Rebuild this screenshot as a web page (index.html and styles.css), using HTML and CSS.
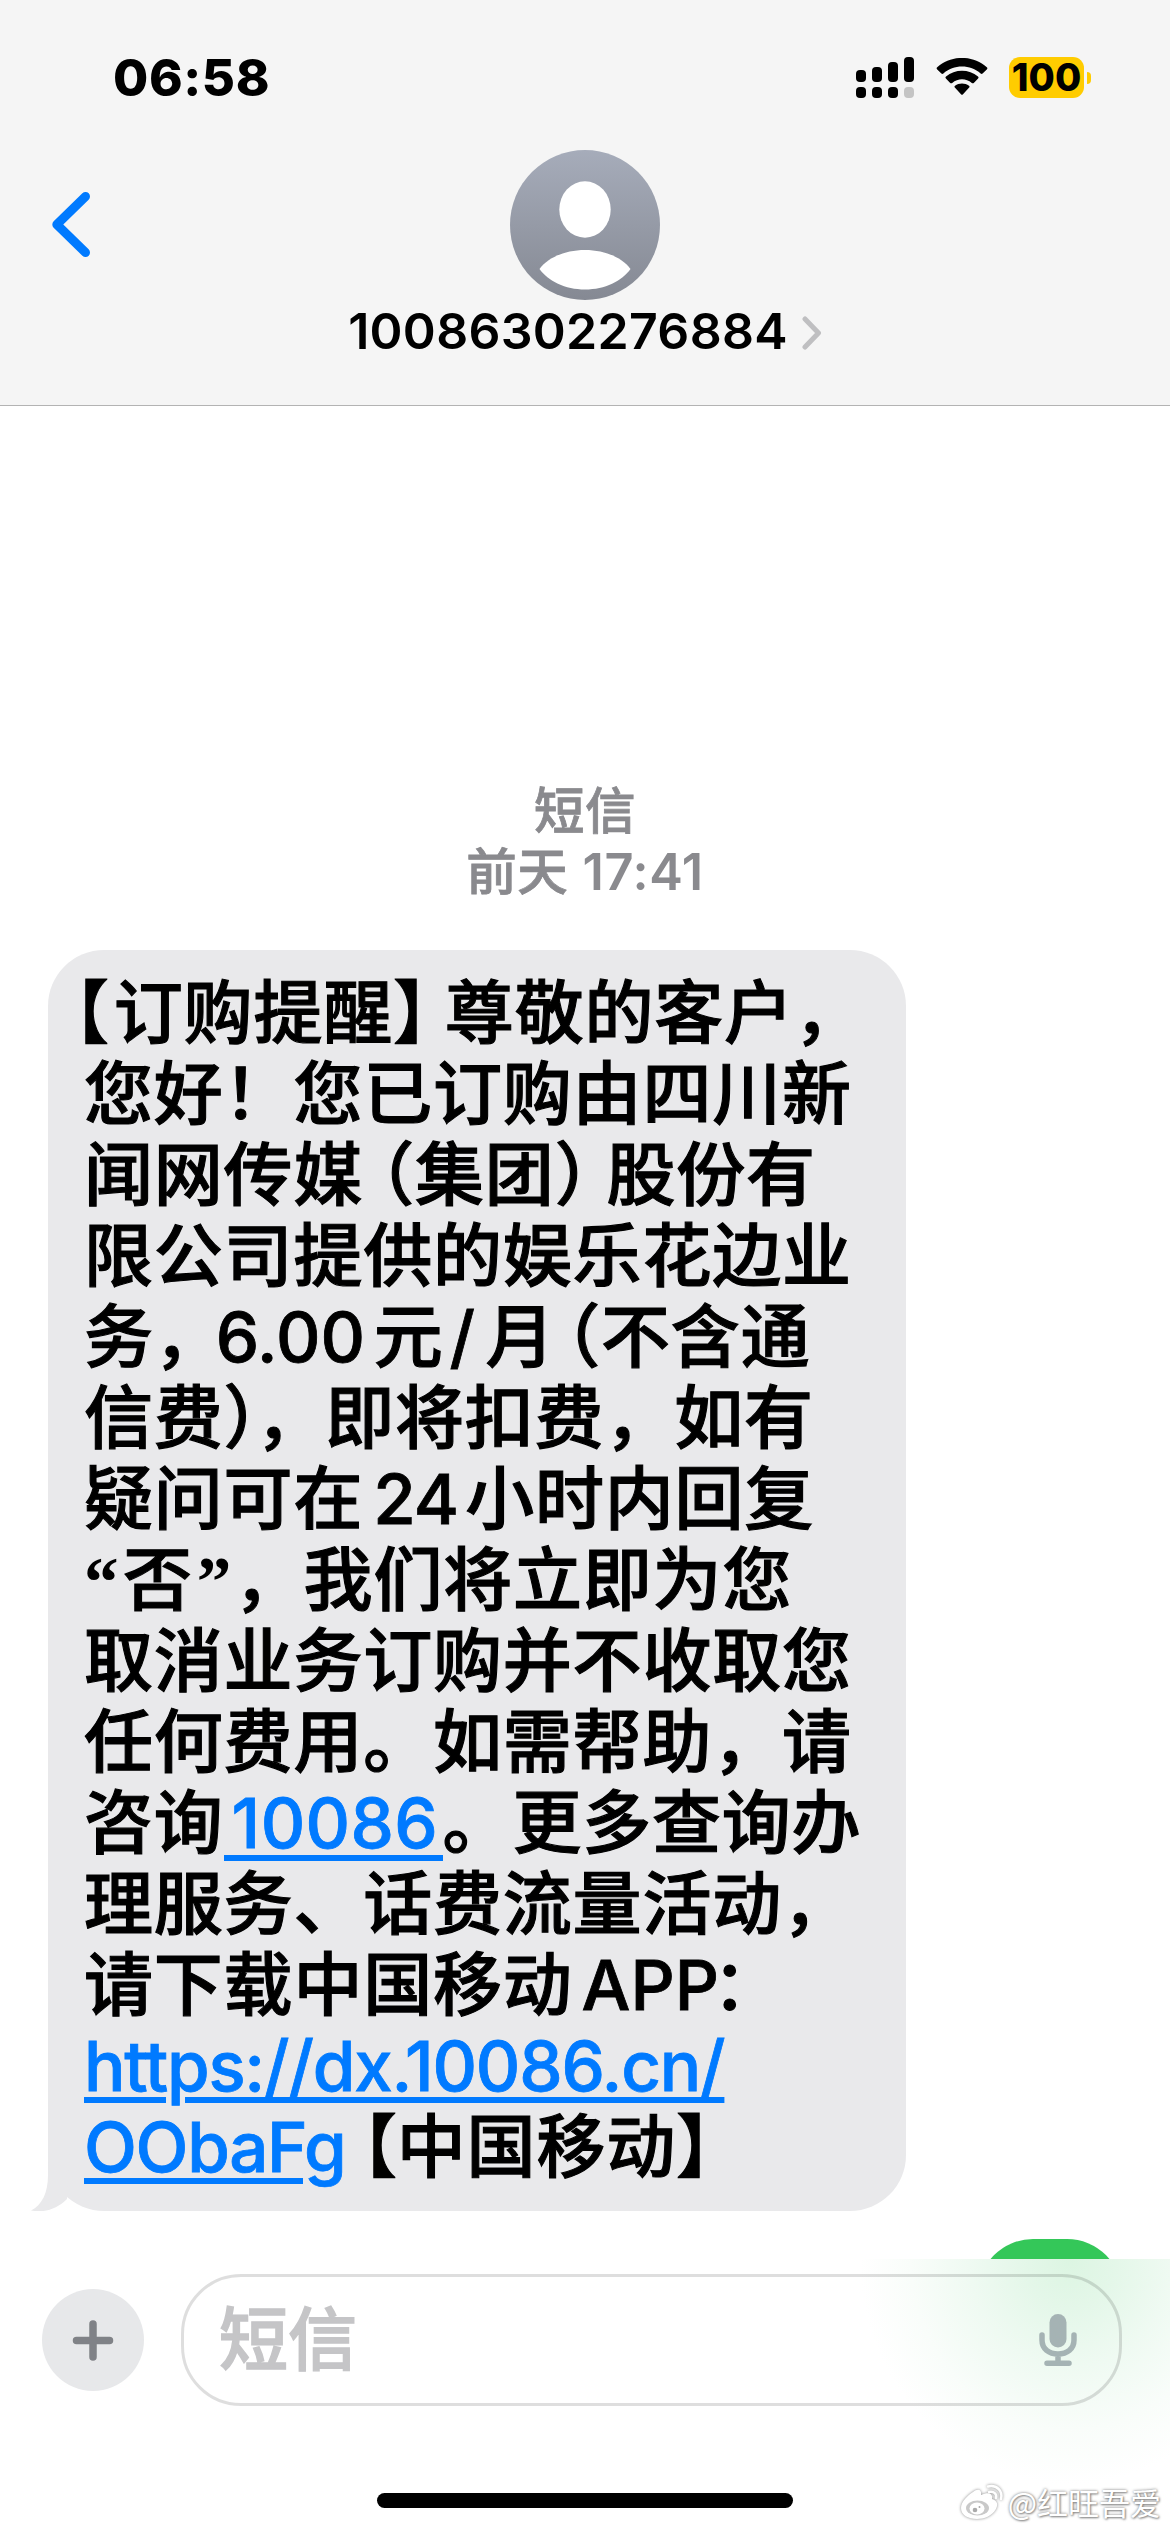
FILE: index.html
```html
<!DOCTYPE html>
<html lang="zh-CN">
<head>
<meta charset="utf-8">
<title>10086302276884</title>
<link rel="stylesheet" href="styles.css">
</head>
<body>
<div class="screen">
  <header class="top">
    <div class="status">
      <span class="clock">06:58</span>
      <div class="indicators">
        <svg class="signal" width="58" height="41" viewBox="0 0 58 41">
          <rect x="0" y="13" width="10" height="12" rx="4"/><rect x="16" y="10" width="10" height="15" rx="4"/><rect x="32" y="5" width="10" height="20" rx="4"/><rect x="48" y="0" width="10" height="25" rx="4"/>
          <rect x="0" y="30" width="10" height="11" rx="4"/><rect x="16" y="30" width="10" height="11" rx="4"/><rect x="32" y="30" width="10" height="11" rx="4"/><rect x="48" y="30" width="10" height="11" rx="4" fill="#c4c4c4"/>
        </svg>
        <svg class="wifi" width="52" height="38" viewBox="0 0 52 38">
          <path d="M1.2 11.4Q0 10.2 1.2 9.2C15-3.2 37-3.2 50.8 9.2Q52 10.2 50.800 11.400L46.600 15.600Q45.600 16.400 44.600 15.500C34.500 6.200 17.500 6.200 7.400 15.500Q6.400 16.400 5.400 15.600Z"/>
          <path d="M9.900 20.600Q8.800 19.500 10 18.500C19 10.700 33 10.700 42 18.500Q43.200 19.500 42.100 20.600L37.800 24.900Q36.800 25.700 35.800 24.900C30 20 22 20 16.200 24.900Q15.200 25.700 14.200 24.900Z"/>
          <path d="M18.800 29.600Q17.800 28.500 19 27.700C23 24.700 29 24.700 33 27.700Q34.200 28.500 33.200 29.600L27 36.300Q26 37.300 25 36.300Z"/>
        </svg>
        <div class="battery"><span class="level">100</span><i class="nub"></i></div>
      </div>
    </div>
    <div class="nav">
      <svg class="back" width="40" height="68" viewBox="0 0 40 68"><path d="M34.500 6.500 5.800 34.500 34.500 62.500"/></svg>
      <div class="contact">
        <svg class="avatar" width="150" height="150" viewBox="0 0 150 150">
          <defs><linearGradient id="sky" x1="0" y1="0" x2="0" y2="1"><stop offset="0" stop-color="#a6acba"/><stop offset="1" stop-color="#858993"/></linearGradient></defs>
          <circle cx="75" cy="75" r="75" fill="url(#sky)"/>
          <ellipse cx="75" cy="59.500" rx="25.700" ry="28.200"/>
          <path d="M29.500 119C37 108 55 100 75 100S113 108 120.500 119C112 131 95 139.500 75 139.500S38 131 29.500 119Z"/>
        </svg>
        <div class="name"><span class="number">10086302276884</span><svg class="more" width="20" height="34" viewBox="0 0 20 34"><path d="M3 3 16.500 17 3 31"/></svg></div>
      </div>
    </div>
  </header>

  <main class="thread">
    <div class="stamp"><div>短信</div><div class="when">前天 <span class="time">17:41</span></div></div>
    <div class="bubble in">
      <p><span class="half hang">【</span>订购提醒<span class="half close">】</span>尊敬的客户，</p>
      <p>您好！您已订购由四川新</p>
      <p>闻网传媒<span class="half open">（</span>集团<span class="half close">）</span>股份有</p>
      <p>限公司提供的娱乐花边业</p>
      <p>务<span class="half">，</span><span class="latin price">6.00</span>元<span class="latin slash">/</span>月<span class="half open-near">（</span>不含通</p>
      <p>信费<span class="half tight">）</span>，即将扣费，如有</p>
      <p>疑问可在<span class="latin hours">24</span>小时内回复</p>
      <p><span class="latin quote-l">“</span>否<span class="latin quote-r">”</span>，我们将立即为您</p>
      <p>取消业务订购并不收取您</p>
      <p>任何费用。如需帮助，请</p>
      <p>咨询<a class="latin tel">10086</a>。更多查询办</p>
      <p>理服务、话费流量活动，</p>
      <p>请下载中国移动<span class="latin app">APP</span>：</p>
      <p><a class="latin url">https://dx.10086.cn/</a></p>
      <p><a class="latin path">OObaFg</a><span class="half open-end">【</span>中国移动】</p>
      <svg class="tail" width="50" height="60" viewBox="0 0 50 60"><path d="M18 0V24C18 42 12 54 1 59.500C15 62 27 58 37 48L40 0Z"/></svg>
    </div>
    <div class="bubble out"></div>
  </main>

  <footer class="composer">
    <div class="entry">
      <svg class="plus" width="102" height="102" viewBox="0 0 102 102"><circle cx="51" cy="51" r="51" fill="#e7e8ea" stroke="none"/><path d="M51 35V68M34.500 51.500H67.500"/></svg>
      <div class="field">
        <span class="placeholder">短信</span>
        <svg class="mic" width="38" height="53" viewBox="0 0 38 53"><rect x="10.500" y="0" width="17" height="33.500" rx="8.500" fill="#a5b3b4" stroke="none"/><path d="M3 21V26C3 35 10 40 19 40S35 35 35 26V21M19 40V49M8 49.300H30"/></svg>
      </div>
    </div>
    <div class="home"></div>
    <div class="watermark">
      <svg width="44" height="36" viewBox="0 0 44 36"><path d="M13 8C18 4 22 6 21 11C28 8 33 9 32 15C38 17 38 21 36 25C32 32 24 35 17 35C8 35 1 31 1 24C1 18 7 12 13 8Z"/><ellipse class="hole" cx="17.500" cy="24" rx="11.500" ry="7.500"/><ellipse cx="17" cy="24.500" rx="7.500" ry="6"/><circle class="dot" cx="15" cy="26" r="2.300"/><circle class="dot" cx="19.500" cy="23" r="1"/><path class="wave" d="M28 2.500C37 .5 43 7 41 15M29 8C34 7 37 10 36 14"/></svg>
      <span>@红旺吾爱</span>
    </div>
  </footer>
</div>
</body>
</html>
```

FILE: styles.css
```css
* { box-sizing: border-box; margin: 0; padding: 0; }

body {
  width: 1170px;
  height: 2532px;
  overflow: hidden;
  background: #fff;
  color: #000;
  font-family: Inter, "Noto Sans CJK SC", sans-serif;
}

svg { display: block; }

.screen { width: 1170px; height: 2532px; display: flex; flex-direction: column; }

/* header */
.top { height: 406px; background: #f5f5f5; border-bottom: 1px solid #b3b3b3; }
.status { height: 150px; padding: 57px 79px 0 113px; display: flex; justify-content: space-between; }
.clock { font-size: 51px; line-height: 42px; font-weight: 800; letter-spacing: .6px; }
.indicators { display: flex; height: 41px; }
.wifi { margin: 1px 21px 0 22px; }
.battery { display: flex; align-items: center; gap: 3px; }
.level {
  width: 75px; height: 41px; border-radius: 11px; background: #fc0;
  font-size: 38px; line-height: 41px; font-weight: 800; text-align: center; letter-spacing: 0;
}
.nub { width: 4px; height: 12px; border-radius: 0 6px 6px 0; background: #fc0; }

.nav { display: grid; grid-template-columns: 200px 1fr 200px; padding-left: 51px; padding-right: 51px; }
.back { margin-top: 40px; fill: none; stroke: #007aff; stroke-width: 9; stroke-linecap: round; stroke-linejoin: round; }
.contact { display: flex; flex-direction: column; align-items: center; }
.avatar { fill: #fff; }
.name { display: flex; align-items: center; gap: 14px; height: 62px; }
.number { font-size: 50px; line-height: 62px; font-weight: 600; letter-spacing: .3px; }
.more { fill: none; stroke: #bfbfc1; stroke-width: 5; stroke-linecap: round; stroke-linejoin: round; margin-top: 4px; }

/* thread */
.thread { height: 1853px; overflow: hidden; padding: 374px 48px 0; display: flex; flex-direction: column; }
.stamp {
  flex: none; height: 170px; text-align: center; color: #8a8a8e;
  font-size: 50.5px; line-height: 61px; font-weight: 500; letter-spacing: .6px;
  -webkit-text-stroke: .8px #8a8a8e;
}
.time { font-weight: 600; -webkit-text-stroke: 0; }
.bubble { border-radius: 56px; flex: none; }
.in { position: relative; align-self: flex-start; width: 858px; height: 1261px; padding: 23px 0 0 36px; background: #e9e9eb; }
.in p {
  height: 81px;
  font-size: 69px; line-height: 81px; font-weight: 500; letter-spacing: .8px;
  white-space: nowrap; text-spacing-trim: space-all;
  -webkit-text-stroke: 1.1px currentColor;
}
.out { align-self: flex-end; width: 144px; height: 110px; margin-top: 28px; background: #34c759; }
.tail { position: absolute; left: -18px; bottom: 0; fill: #e9e9eb; }

/* punctuation set on a half-width cell */
.half { font-feature-settings: "halt"; }
.hang { margin-left: -9.5px; margin-right: 4px; }
.close { margin-right: 16.5px; }
.open { margin-left: 16.5px; }
.open-near { margin-left: 10.5px; }
.tight { margin-right: -3.5px; }
.open-end { margin-left: 15.5px; margin-right: -1px; }

.latin { display: inline-block; letter-spacing: 0; -webkit-text-stroke: .8px currentColor; }
.quote-l, .quote-r { font-family: "Liberation Serif", serif; font-weight: 700; line-height: 0; -webkit-text-stroke: 0; }
.quote-l { width: 39px; }
.quote-r { width: 41px; padding-left: 4px; }
.price { width: 158px; margin-left: 26.5px; }
.slash { width: 42px; padding-left: 6px; }
.hours { width: 102px; padding-left: 10px; letter-spacing: -1px; }
.tel {
  width: 219px; padding-left: 8px; letter-spacing: .4px;
  background: linear-gradient(#007aff, #007aff) no-repeat 0 72px / 100% 6px;
}
.app { width: 140px; padding-left: 9px; }
.url { width: 640px; letter-spacing: -1.2px; }
.path { width: 263px; letter-spacing: -1.3px; }
a { color: #007aff; }
.url, .path { text-decoration: underline; text-decoration-thickness: 6px; text-underline-offset: 6px; }

/* composer */
.composer {
  position: relative; height: 273px; padding: 15px 48px 0 42px;
  background: radial-gradient(ellipse 210px 225px at 1070px 0, #dcf5e2 0, #e4f7e9 22%, #effaf2 48%, #f9fdfa 76%, #fff 100%);
}
.entry { display: flex; align-items: center; gap: 37px; }
.field {
  flex: 1; height: 132px; border: 3px solid rgba(0, 0, 0, .13); border-radius: 60px;
  display: flex; align-items: center; justify-content: space-between; padding: 0 42px 0 35px;
}
.plus { fill: none; stroke: #808287; stroke-width: 7.500; stroke-linecap: round; }
.placeholder { font-size: 69px; line-height: 90px; font-weight: 500; color: #c5c5c7; -webkit-text-stroke: 1.4px #c5c5c7; }
.mic { fill: none; stroke: #a5b3b4; stroke-width: 5.500; stroke-linecap: round; }
.home { width: 416px; height: 15px; margin: 87px auto 0 335px; border-radius: 8px; background: #000; }
.watermark {
  position: absolute; right: 9px; bottom: 10px; display: flex; align-items: center; gap: 4px;
  color: #fff; font: 400 31px/40px "Noto Sans CJK SC", sans-serif;
  text-shadow: 0 0 3px #777, 1px 1px 2px #999;
}
.watermark svg { fill: #fff; filter: drop-shadow(0 0 1.500px #888); overflow: visible; }
.watermark .hole { fill: #c9c9c9; }
.watermark .dot { fill: #aaa; }
.watermark .wave { fill: none; stroke: #fff; stroke-width: 2.500; stroke-linecap: round; }
```
